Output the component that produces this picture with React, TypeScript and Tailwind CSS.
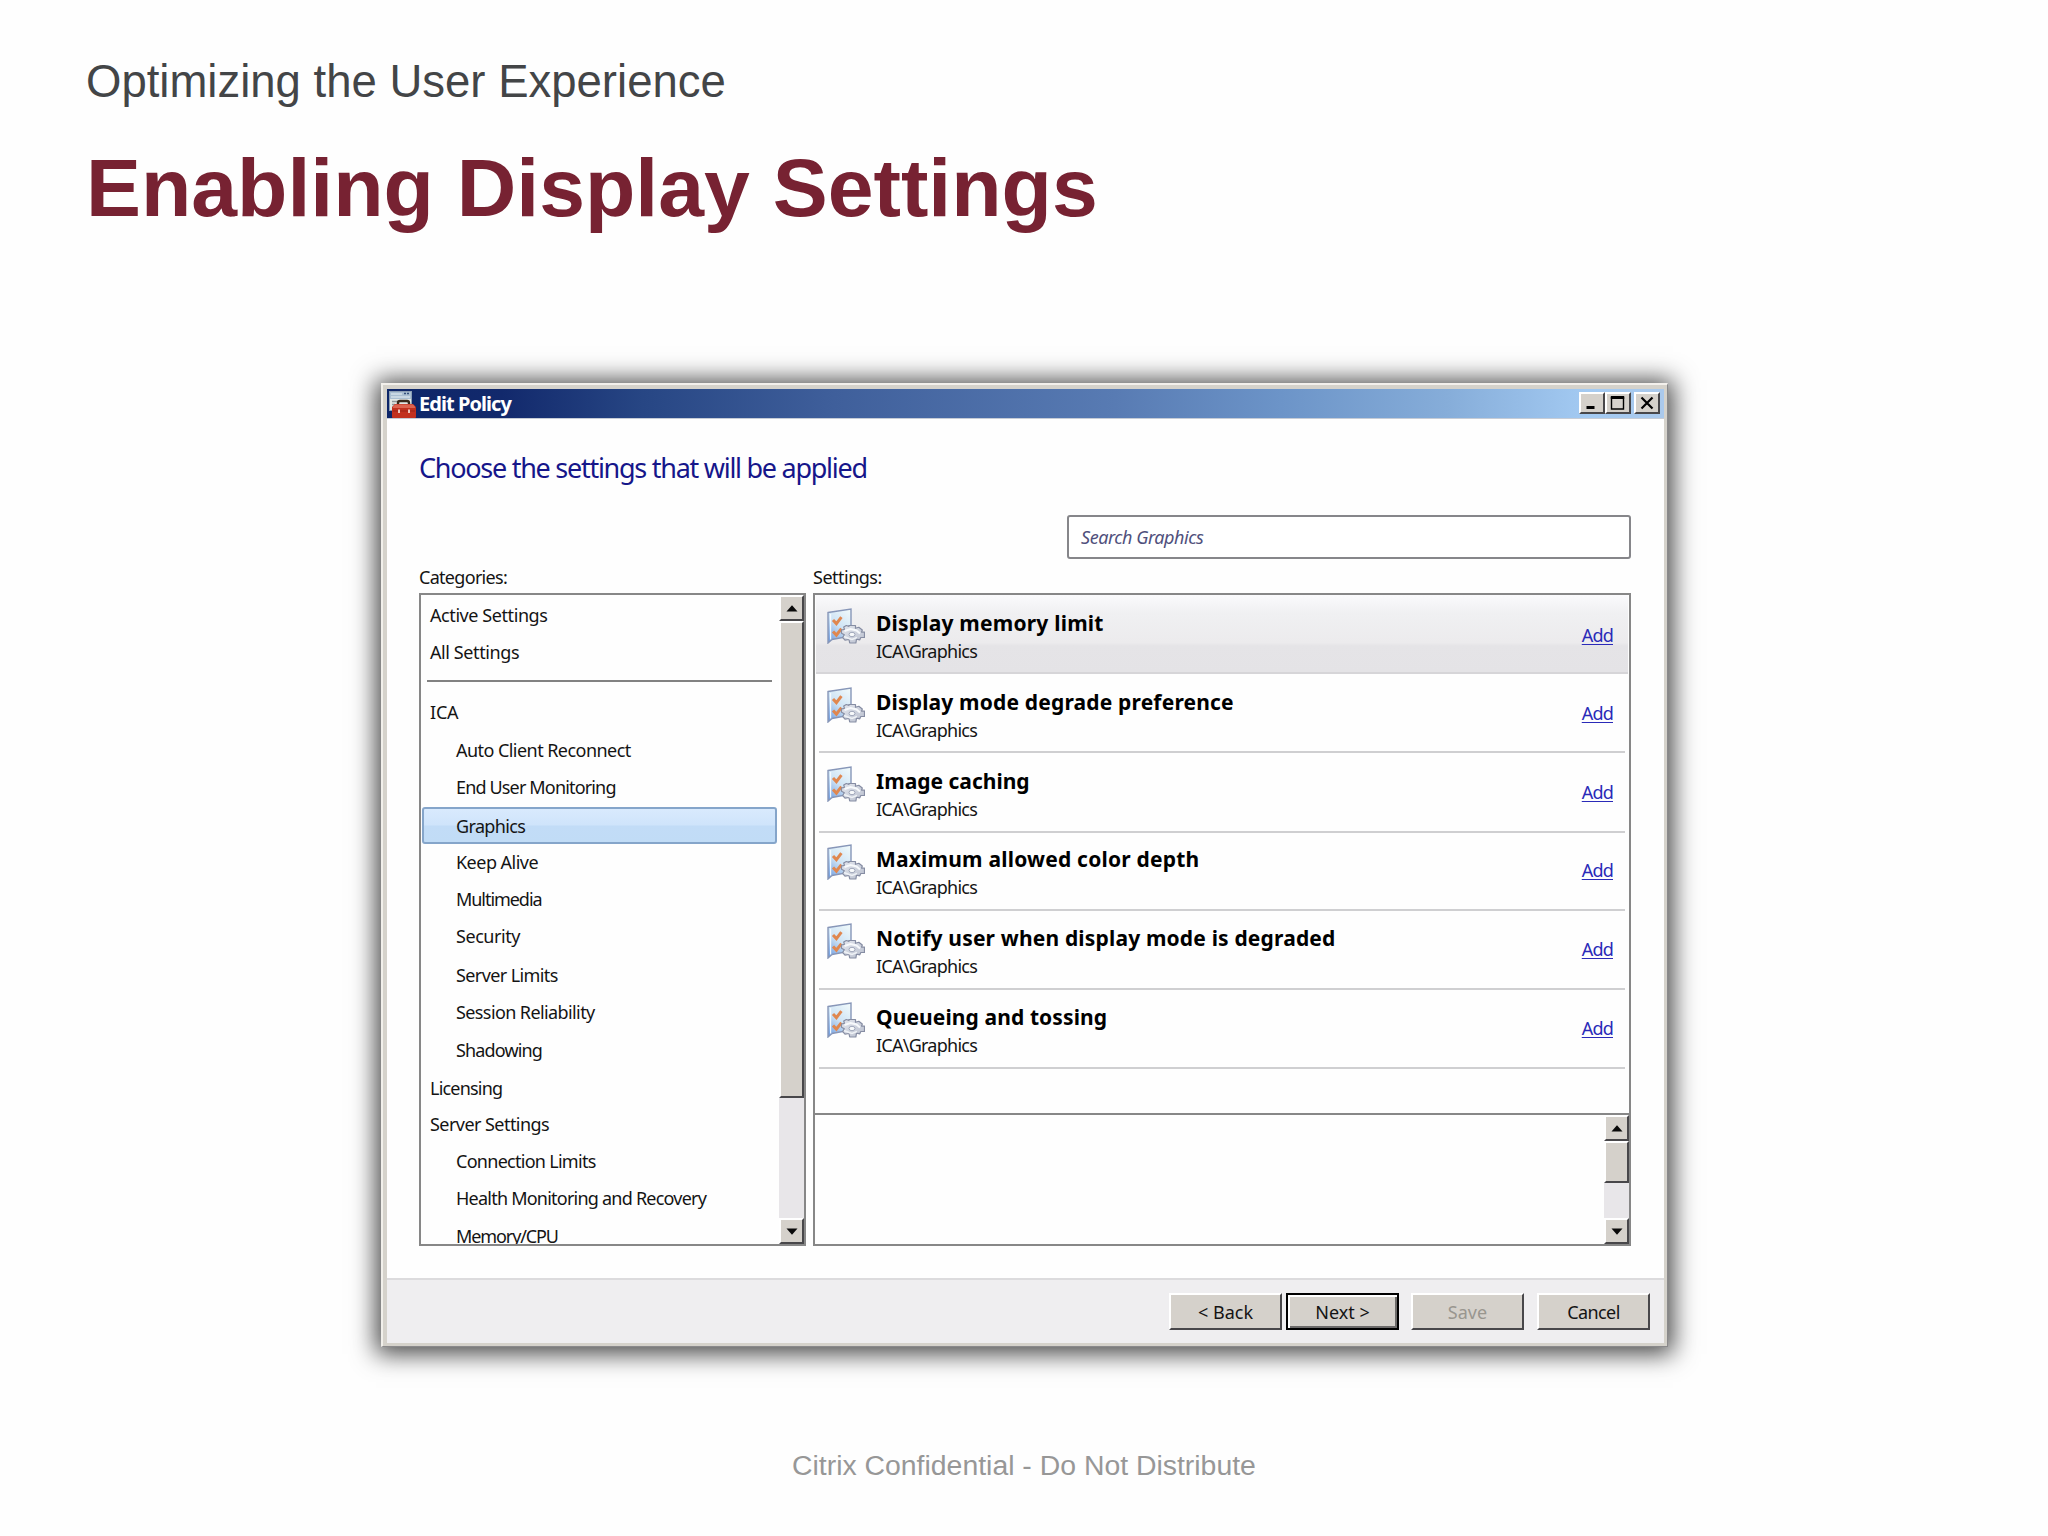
import type { ReactNode } from "react";

/**
 * Training slide with the "Edit Policy" wizard (classic Windows look).
 */

type Category = {
    name: string;
    tracking: string;
    height: string;
    child?: boolean;
    selected?: boolean;
};

type Setting = {
    title: string;
    tracking: string;
    row: string;
};

const CATEGORIES: Category[] = [
    { name: "ICA", tracking: "tracking-[-0.2px]", height: "h-[38px]" },
    { name: "Auto Client Reconnect", tracking: "tracking-[-0.55px]", height: "h-[37px]", child: true },
    { name: "End User Monitoring", tracking: "tracking-[-0.84px]", height: "h-[38px]", child: true },
    { name: "Graphics", tracking: "tracking-[-0.65px]", height: "h-[37px]", child: true, selected: true },
    { name: "Keep Alive", tracking: "tracking-[-0.52px]", height: "h-[37px]", child: true },
    { name: "Multimedia", tracking: "tracking-[-1.05px]", height: "h-[37px]", child: true },
    { name: "Security", tracking: "tracking-[-0.45px]", height: "h-[39px]", child: true },
    { name: "Server Limits", tracking: "tracking-[-0.6px]", height: "h-[37px]", child: true },
    { name: "Session Reliability", tracking: "tracking-[-0.6px]", height: "h-[38px]", child: true },
    { name: "Shadowing", tracking: "tracking-[-0.85px]", height: "h-[38px]", child: true },
    { name: "Licensing", tracking: "tracking-[-0.8px]", height: "h-[36px]" },
    { name: "Server Settings", tracking: "tracking-[-0.55px]", height: "h-[37px]" },
    { name: "Connection Limits", tracking: "tracking-[-0.72px]", height: "h-[37px]", child: true },
    { name: "Health Monitoring and Recovery", tracking: "tracking-[-0.77px]", height: "h-[38px]", child: true },
    { name: "Memory/CPU", tracking: "tracking-[-1.1px]", height: "h-[25px]", child: true },
];

const SETTINGS: Setting[] = [
    { title: "Display memory limit", tracking: "tracking-[0.2px]", row: "h-[79px] pt-[14px]" },
    { title: "Display mode degrade preference", tracking: "tracking-[0.17px]", row: "h-[79px] pt-[14px]" },
    { title: "Image caching", tracking: "tracking-[0px]", row: "h-[80px] pt-[14px]" },
    { title: "Maximum allowed color depth", tracking: "tracking-[0.2px]", row: "h-[78px] pt-[12px]" },
    { title: "Notify user when display mode is degraded", tracking: "tracking-[0.17px]", row: "h-[79px] pt-[13px]" },
    { title: "Queueing and tossing", tracking: "tracking-[0.1px]", row: "h-[79px] pt-[13px]" },
];

const BEVEL =
    "bg-[#d5d1cb] border-t-2 border-l-2 border-t-white border-l-white border-b-2 border-r-2 border-b-[#48474a] border-r-[#48474a]";

function PolicyIcon() {
    return (
        <svg width="27" height="27" viewBox="0 0 27 27">
            <rect x="0.5" y="0.5" width="22" height="19" fill="#e3e8e4" stroke="#8d9fb4" />
            <rect x="1" y="1" width="21" height="7" fill="#a9bfd1" />
            <path d="M2 3h11M2 6h19" stroke="#e8f1f5" />
            <path d="M15 2.5h2M18 2.5h2" stroke="#35507c" strokeWidth="1.5" />
            <path d="M3 10.5h6M3 13.5h3M3 16.5h2" stroke="#8f9698" strokeWidth="1.5" />
            <path d="M9 14v-2q0-2 2-2h7q2 0 2 2v2" fill="none" stroke="#3a2a1c" strokeWidth="2.4" />
            <path d="M3 16l3-3h18l3 3v10q0 1-1 1H4q-1 0-1-1z" fill="#c2311f" />
            <path d="M4 15.500l2-2h18l2 2v1.500H4z" fill="#dd6450" />
            <path d="M4 20h22" stroke="#9c2418" />
            <rect x="9" y="18.5" width="2" height="3.5" fill="#f0c9c0" />
            <rect x="19" y="18.5" width="2" height="3.5" fill="#f0c9c0" />
        </svg>
    );
}

function SettingIcon() {
    return (
        <svg className="shrink-0 -mt-px" width="38" height="36" viewBox="0 0 38 36">
            <defs>
                <linearGradient id="sheet" x1="0.8" y1="0" x2="0.2" y2="1">
                    <stop offset="0" stopColor="#eef8fa" />
                    <stop offset="0.5" stopColor="#cfe4f5" />
                    <stop offset="1" stopColor="#76a2e2" />
                </linearGradient>
                <linearGradient id="gear" x1="0" y1="0" x2="1" y2="1">
                    <stop offset="0" stopColor="#e4e7ee" />
                    <stop offset="1" stopColor="#b9bfce" />
                </linearGradient>
            </defs>
            <path d="M1 4.500L24 1V28L5 31.500L1 35z" fill="url(#sheet)" stroke="#8796b8" strokeWidth="1.4" />
            <path d="M3.6 6V31.500" stroke="#f4fafe" strokeWidth="1.2" />
            <path d="M6 12l3.400 3.600l5-6.400" fill="none" stroke="#e0874f" strokeWidth="3" />
            <path d="M6 23.500l3.400 3.600l5-6.400" fill="none" stroke="#e0874f" strokeWidth="3" />
            <path
                d="M22 17.500h6.500v2.800l3.300-1l3.500 2.700l-.8 2.200h3v5.300h-3.700l-1 2.300l-3.300-.6l-.6 3.800h-6.200l-.7-3.500l-4 .6l-2.300-2.500l1.600-2.800l-2.800-1.500v-3.300l3-.6l-.8-2.400l2.600-1.500l2.700.8z"
                fill="url(#gear)"
                stroke="#868da3"
                strokeWidth="1.2"
                strokeLinejoin="round"
            />
            <path d="M17.500 23l6-2l6 1.500l3.500 3" fill="none" stroke="#f7f9fb" strokeWidth="2" />
            <path d="M17 28.500l5 2l3 1l5-2" fill="none" stroke="#eef1f5" strokeWidth="1.6" />
            <ellipse cx="25" cy="26.500" rx="3" ry="2.200" fill="#f8fafb" stroke="#a1a8bb" />
        </svg>
    );
}

function CaptionButton({ className, children }: { className: string; children: ReactNode }) {
    return (
        <div className={`${BEVEL} ${className} h-[22px] flex items-center justify-center`}>
            <svg width="16" height="16" viewBox="0 0 16 16">
                {children}
            </svg>
        </div>
    );
}

function ArrowButton({ down, className }: { down?: boolean; className: string }) {
    return (
        <div className={`${BEVEL} ${className} shrink-0 flex items-center justify-center`}>
            <svg width="12" height="7" viewBox="0 0 12 7">
                <path d={down ? "M0.500 0.500h11L6 6.800z" : "M0.500 6.500h11L6 0.200z"} fill="#0a0a0a" />
            </svg>
        </div>
    );
}

function WizardButton({ className, children }: { className: string; children: ReactNode }) {
    return (
        <button className={`w-[113px] h-[37px] pt-[2px] flex items-center justify-center text-[18px] ${className}`}>
            {children}
        </button>
    );
}

function TitleBar() {
    return (
        <div className="h-[30px] flex items-start pl-[2px] pr-[4px] border-b border-[#c6ccd6] bg-[linear-gradient(90deg,#0d2668_0%,#12296c_9%,#274684_20%,#3f5f9b_35%,#587bb3_57%,#6c94c8_70%,#86add9_83%,#a3caf2_94%,#aac9ec_100%)]">
            <div className="pt-[2px]">
                <PolicyIcon />
            </div>
            <span className="ml-[3px] grow text-white font-bold text-[20px] leading-[29px] tracking-[-0.95px]">
                Edit Policy
            </span>
            <div className="flex pt-[3px]">
                <CaptionButton className="w-[26px]">
                    <path d="M2.500 12.500h8" stroke="#000" strokeWidth="3" />
                </CaptionButton>
                <CaptionButton className="w-[26px]">
                    <path d="M1.500 2v12h12V2" fill="none" stroke="#000" strokeWidth="1.400" />
                    <path d="M0.800 2.500h13.400" stroke="#000" strokeWidth="3" />
                </CaptionButton>
                <CaptionButton className="w-[26px] ml-[3px]">
                    <path d="M2.500 2.500l11 11M13.500 2.500l-11 11" stroke="#000" strokeWidth="2.200" />
                </CaptionButton>
            </div>
        </div>
    );
}

function CategoryList() {
    return (
        <div className="w-[387px] h-[653px] flex border-2 border-[#878787] overflow-hidden">
            <div className="grow pt-[3px] overflow-hidden">
                <div className="h-[36px] leading-[35px] pl-[9px] tracking-[-0.42px]">Active Settings</div>
                <div className="h-[36px] leading-[37px] pl-[9px] tracking-[-0.4px]">All Settings</div>
                <div className="ml-[6px] mr-[7px] mt-[10px] mb-[12px] h-[2px] bg-[#828282]"></div>
                {CATEGORIES.map((c) =>
                    c.selected ? (
                        <div
                            key={c.name}
                            className={`${c.height} ${c.tracking} ml-[1px] mr-[2px] pl-[32px] leading-[34px] rounded-[3px] border-2 border-[#85a5ca] bg-[linear-gradient(180deg,#d9eafd_0%,#cfe4fb_48%,#c2dcf7_52%,#c1dcf6_100%)]`}
                        >
                            {c.name}
                        </div>
                    ) : (
                        <div key={c.name} className={`${c.height} ${c.tracking} ${c.child ? "pl-[35px]" : "pl-[9px]"} leading-[36px]`}>
                            {c.name}
                        </div>
                    )
                )}
            </div>
            <div className="w-[25px] shrink-0 flex flex-col bg-[#e8e6e9]">
                <ArrowButton className="h-[26px]" />
                <div className={`${BEVEL} h-[477px]`}></div>
                <div className="grow"></div>
                <ArrowButton down className="h-[26px]" />
            </div>
        </div>
    );
}

function SettingsPane() {
    return (
        <div className="w-[818px] h-[653px] flex flex-col border-2 border-[#878787]">
            <div className="h-[518px] overflow-hidden">
                {SETTINGS.map((s, i) => (
                    <div
                        key={s.title}
                        className={`${s.row} flex items-start border-b-2 ${
                            i === 0
                                ? "mx-[1px] pl-[11px] pr-[15px] border-[#d6d5d8] bg-[linear-gradient(180deg,#fafafc_0%,#f0f0f2_24%,#ecebed_62%,#e5e4e7_66%,#e4e3e6_100%)]"
                                : "mx-[4px] pl-[8px] pr-[12px] border-[#cfcfd1]"
                        }`}
                    >
                        <SettingIcon />
                        <div className="grow ml-[11px]">
                            <div className={`font-bold text-[21px] leading-[28px] text-black ${s.tracking}`}>{s.title}</div>
                            <div className="leading-[28px] tracking-[-0.75px]">ICA\Graphics</div>
                        </div>
                        <a
                            className={`leading-[24px] text-[#2a2ab8] underline underline-offset-2 tracking-[-0.8px] ${
                                i === 0 ? "mt-[14px]" : "mt-[13px]"
                            }`}
                        >
                            Add
                        </a>
                    </div>
                ))}
            </div>
            <div className="grow flex border-t-2 border-[#878787]">
                <div className="grow"></div>
                <div className="w-[25px] flex flex-col bg-[#e8e6e9]">
                    <ArrowButton className="h-[26px]" />
                    <div className={`${BEVEL} h-[42px]`}></div>
                    <div className="grow"></div>
                    <ArrowButton down className="h-[26px]" />
                </div>
            </div>
        </div>
    );
}

function EditPolicyWindow() {
    return (
        <div className="ml-[381px] w-[1287px] h-[964px] pt-[4px] pl-[4px] pr-[3px] pb-[3px] flex flex-col bg-[#d5d2cb] border-t-2 border-l-2 border-r border-b border-t-[#f3f0ec] border-l-[#f1efea] border-r-[#8a898b] border-b-[#8a898b] shadow-[0_2px_23px_5px_rgba(0,0,0,0.72)] font-['Noto_Sans',sans-serif] text-[18px] text-[#141414]">
            <TitleBar />
            <div className="grow bg-[#fefefe] pl-[32px] pr-[33px]">
                <h2 className="pt-[31px] text-[27px] leading-[36px] tracking-[-1.27px] text-[#16168a]">
                    Choose the settings that will be applied
                </h2>
                <div className="flex justify-end pt-[29px]">
                    <div className="w-[564px] h-[44px] pl-[12px] leading-[40px] rounded-[3px] border-2 border-[#86868a] bg-white italic text-[#50507c] tracking-[-0.45px]">
                        Search Graphics
                    </div>
                </div>
                <div className="flex gap-[7px] pt-[6px]">
                    <div>
                        <div className="h-[28px] leading-[24px] tracking-[-0.7px]">Categories:</div>
                        <CategoryList />
                    </div>
                    <div>
                        <div className="h-[28px] leading-[24px] tracking-[-0.5px]">Settings:</div>
                        <SettingsPane />
                    </div>
                </div>
            </div>
            <div className="h-[65px] flex justify-end pt-[13px] pr-[14px] border-t-2 border-[#dcdbdd] bg-[#efeef0]">
                <WizardButton className={BEVEL}>&lt; Back</WizardButton>
                <WizardButton className="ml-[4px] bg-[#d5d1cb] border-2 border-black shadow-[inset_2px_2px_0_#fff,inset_-2px_-2px_0_#6d6b6a]">
                    Next &gt;
                </WizardButton>
                <WizardButton className={`${BEVEL} ml-[12px] text-[#99968f]`}>Save</WizardButton>
                <WizardButton className={`${BEVEL} ml-[13px] tracking-[-0.6px]`}>Cancel</WizardButton>
            </div>
        </div>
    );
}

export default function App() {
    return (
        <div className="w-[2048px] h-[1536px] overflow-hidden bg-[#fefefe] font-['Liberation_Sans',Arial,sans-serif]">
            <div className="h-[383px] pt-[56px] pl-[86px]">
                <p className="text-[45.5px] leading-[52px] text-[#434547]">Optimizing the User Experience</p>
                <h1 className="mt-[31px] text-[82.4px] leading-[96px] font-bold text-[#772232]">
                    Enabling Display Settings
                </h1>
            </div>
            <EditPolicyWindow />
            <p className="mt-[98px] pl-[792px] text-[28.4px] leading-[40px] text-[#979797]">
                Citrix Confidential - Do Not Distribute
            </p>
        </div>
    );
}
